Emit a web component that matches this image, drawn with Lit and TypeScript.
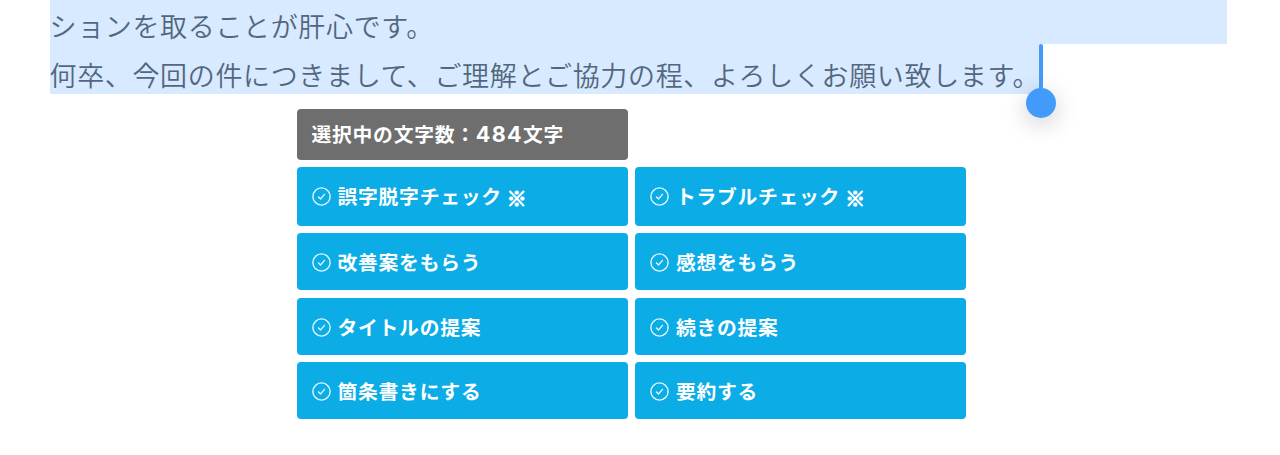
import { LitElement, html, css, svg } from "lit";
import { customElement, property } from "lit/decorators.js";
import { classMap } from "lit/directives/class-map.js";

const checkIcon = svg`
  <circle cx="9.5" cy="9.5" r="8.6" />
  <path d="M6.5 9.9 L8.6 11.9 L12.5 7.4" />
`;

@customElement("action-button")
class ActionButton extends LitElement {
  @property() label = "";
  @property({ type: Boolean }) noted = false;

  static styles = css`
    :host {
      display: block;
    }
    .button {
      box-sizing: border-box;
      width: 100%;
      height: 100%;
      display: flex;
      align-items: center;
      padding: 2px 14px 0 14.5px;
      border: 0;
      border-radius: 4px;
      background: #0cace7;
      color: #fff;
      font: inherit;
      letter-spacing: inherit;
      text-align: left;
    }
    .with-note {
      padding-top: 0;
    }
    .icon {
      width: 19px;
      height: 19px;
      flex: none;
      margin-right: 7px;
      fill: none;
      stroke: #e4faff;
      stroke-width: 1.4;
      stroke-linecap: round;
      stroke-linejoin: round;
    }
    .label {
      line-height: 30px;
      margin-top: -1px;
      white-space: nowrap;
    }
    .note {
      line-height: 30px;
      margin: 2px 0 0 5px;
      -webkit-text-stroke: 1.1px #fff;
    }
  `;

  render() {
    return html`<button class=${classMap({ button: true, "with-note": this.noted })}>
      <svg class="icon" viewBox="0 0 19 19">${checkIcon}</svg>
      <span class="label">${this.label}</span>
      ${this.noted ? html`<span class="note">※</span>` : null}
    </button>`;
  }
}

@customElement("app-root")
class AppRoot extends LitElement {
  static styles = css`
    :host {
      display: block;
      height: 455px;
      overflow: hidden;
      background: #fff;
      font-family: "Noto Sans CJK JP", sans-serif;
    }
    .text {
      display: flex;
      flex-direction: column;
      align-items: flex-start;
      margin: 0 53.5px 0 50px;
      color: #52677e;
      font-size: 27px;
      font-weight: 350;
      letter-spacing: 0.65px;
      text-indent: -0.5px;
      white-space: nowrap;
    }
    .line {
      box-sizing: border-box;
      background: #d8eaff;
    }
    .first {
      width: 100%;
      height: 44px;
      line-height: 52px;
    }
    .last {
      position: relative;
      width: 991px;
      height: 50px;
      line-height: 62px;
    }
    .caret {
      position: absolute;
      left: 989px;
      top: 0;
      width: 4px;
      height: 50px;
      border-radius: 2px;
      background: #429bfb;
    }
    .knob {
      position: absolute;
      left: 976px;
      top: 44px;
      width: 30px;
      height: 30px;
      border-radius: 50%;
      background: #429bfb;
      box-shadow: 0 6px 24px rgba(0, 0, 0, 0.2);
    }
    .panel {
      display: grid;
      grid-template-columns: 331px 331px;
      grid-template-rows: 51.5px 58.5px 57px 57px 57px;
      gap: 7.4px 7.4px;
      margin: 14.5px 0 0 297px;
      font-size: 19.8px;
      font-weight: 700;
      letter-spacing: 0.75px;
    }
    .count {
      grid-column: 1;
      display: flex;
      align-items: center;
      padding-left: 14.5px;
      border-radius: 4px;
      background: #6e6e6e;
      color: #fff;
      white-space: nowrap;
    }
    .count > span {
      margin-top: -2px;
    }
    .number {
      font-family: Inter, sans-serif;
      font-size: 21.5px;
      letter-spacing: 1.4px;
    }
    .start {
      grid-column: 1;
    }
  `;

  actions = [
    { label: "誤字脱字チェック", noted: true },
    { label: "トラブルチェック", noted: true },
    { label: "改善案をもらう", noted: false },
    { label: "感想をもらう", noted: false },
    { label: "タイトルの提案", noted: false },
    { label: "続きの提案", noted: false },
    { label: "箇条書きにする", noted: false },
    { label: "要約する", noted: false },
  ];

  render() {
    return html`
      <div class="text">
        <div class="line first">ションを取ることが肝心です。</div>
        <div class="line last">何卒、今回の件につきまして、ご理解とご協力の程、よろしくお願い致します。<span class="knob"></span><span class="caret"></span></div>
      </div>
      <div class="panel">
        <div class="count"><span>選択中の文字数：<span class="number">484</span>文字</span></div>
        ${this.actions.map(
          (a, i) => html`<action-button
            class=${i % 2 === 0 ? "start" : ""}
            .label=${a.label}
            .noted=${a.noted}
          ></action-button>`
        )}
      </div>
    `;
  }
}
